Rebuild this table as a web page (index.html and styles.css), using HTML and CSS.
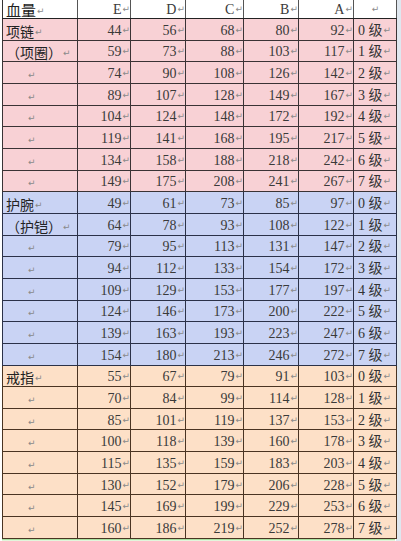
FILE: index.html
```html
<!DOCTYPE html>
<html lang="zh">
<head>
<meta charset="utf-8">
<title>血量</title>
<link rel="stylesheet" href="styles.css">
</head>
<body>
<div class="page">
<table class="grid">
<colgroup>
<col class="c-label"><col class="c-e"><col class="c-d"><col class="c-c"><col class="c-b"><col class="c-a"><col class="c-lv">
</colgroup>
<tr class="head">
<td class="label">血量<span class="pm">↵</span></td>
<td class="num">E<span class="pm">↵</span></td>
<td class="num">D<span class="pm">↵</span></td>
<td class="num dc">C<span class="pm">↵</span></td>
<td class="num">B<span class="pm">↵</span></td>
<td class="num">A<span class="pm">↵</span></td>
<td class="lv mid"><span class="pm">↵</span></td>
</tr>
<tbody id="body"></tbody>
</table>
<div class="next"></div>
</div>
<script>
const groups = [
  {cls:"pink", labels:["项链","（项圈）"], data:[
    [44,56,68,80,92],[59,73,88,103,117],[74,90,108,126,142],[89,107,128,149,167],
    [104,124,148,172,192],[119,141,168,195,217],[134,158,188,218,242],[149,175,208,241,267]]},
  {cls:"blue", labels:["护腕","（护铠）"], data:[
    [49,61,73,85,97],[64,78,93,108,122],[79,95,113,131,147],[94,112,133,154,172],
    [109,129,153,177,197],[124,146,173,200,222],[139,163,193,223,247],[154,180,213,246,272]]},
  {cls:"peach", labels:["戒指"], data:[
    [55,67,79,91,103],[70,84,99,114,128],[85,101,119,137,153],[100,118,139,160,178],
    [115,135,159,183,203],[130,152,179,206,228],[145,169,199,229,253],[160,186,219,252,278]]}
];
const body = document.getElementById("body");
let html = "";
for (const g of groups) {
  g.data.forEach((row, i) => {
    const lab = g.labels[i];
    html += '<tr class="' + g.cls + '">';
    html += lab
      ? '<td class="label">' + lab + '<span class="pm">↵</span></td>'
      : '<td class="label"><span class="pm ind">↵</span></td>';
    row.forEach((v, j) => {
      html += '<td class="num' + (j === 2 ? ' dc' : '') + '">' + v + '<span class="pm">↵</span></td>';
    });
    html += '<td class="lv">' + i + ' 级<span class="pm">↵</span></td>';
    html += '</tr>';
  });
}
body.innerHTML = html;
</script>
</body>
</html>
```

FILE: styles.css
```css
html, body {
  margin: 0;
  padding: 0;
}
body {
  background: #dfe7ef;
  width: 401px;
  height: 541px;
  overflow: hidden;
}
.page {
  width: 396px;
  background: #ffffff;
}
.grid {
  margin-left: 2px;
  border-collapse: collapse;
  table-layout: fixed;
  width: 394px;
  font-family: "Liberation Serif", "Noto Sans CJK SC", serif;
  color: #2a2a2a;
}
.c-label { width: 75px; }
.c-e { width: 53px; }
.c-d { width: 55px; }
.c-c { width: 58px; }
.c-b { width: 55px; }
.c-a { width: 55px; }
.c-lv { width: 43px; }

.grid td {
  padding: 3px 0 0 0;
  border: 1px solid #333;
  border-top: none;
  white-space: nowrap;
  height: 17.67px;
  vertical-align: middle;
  line-height: 14px;
}
.grid tr.head td {
  padding-top: 2px;
  height: 16px;
  background: #ffffff;
  border-right-color: #555;
  border-bottom-color: #222;
}
.label {
  font-family: "Noto Sans CJK SC", sans-serif;
  font-size: 14px;
  padding-left: 3px !important;
  text-align: left;
  color: #222;
}
.head .label { font-size: 15px; }
.num {
  text-align: right;
  font-size: 14px;
  color: #3a3a3a;
}
.lv {
  font-size: 14px;
  padding-left: 4px !important;
  text-align: left;
  color: #333;
}
.lv.mid { text-align: center; padding-left: 0 !important; }
.pm {
  font-family: "DejaVu Sans", sans-serif;
  font-size: 9px;
  line-height: 0;
  color: #8a8a8a;
  margin-left: 1px;
  vertical-align: 2px;
}
.pm.ind { margin-left: 22px; }

tr.pink td { background: #f8d1d5; border-color: #3a3335; }
tr.blue td { background: #c9d3f4; border-color: #2b3148; }
tr.peach td { background: #fde0c7; border-color: #4a3422; }
tr td.dc { border-left-color: #111; }

.next {
  height: 3px;
  background: #e2f6dc;
  border-top: 1px solid #a9e2a0;
  margin-left: 2px;
  width: 393px;
}
```
